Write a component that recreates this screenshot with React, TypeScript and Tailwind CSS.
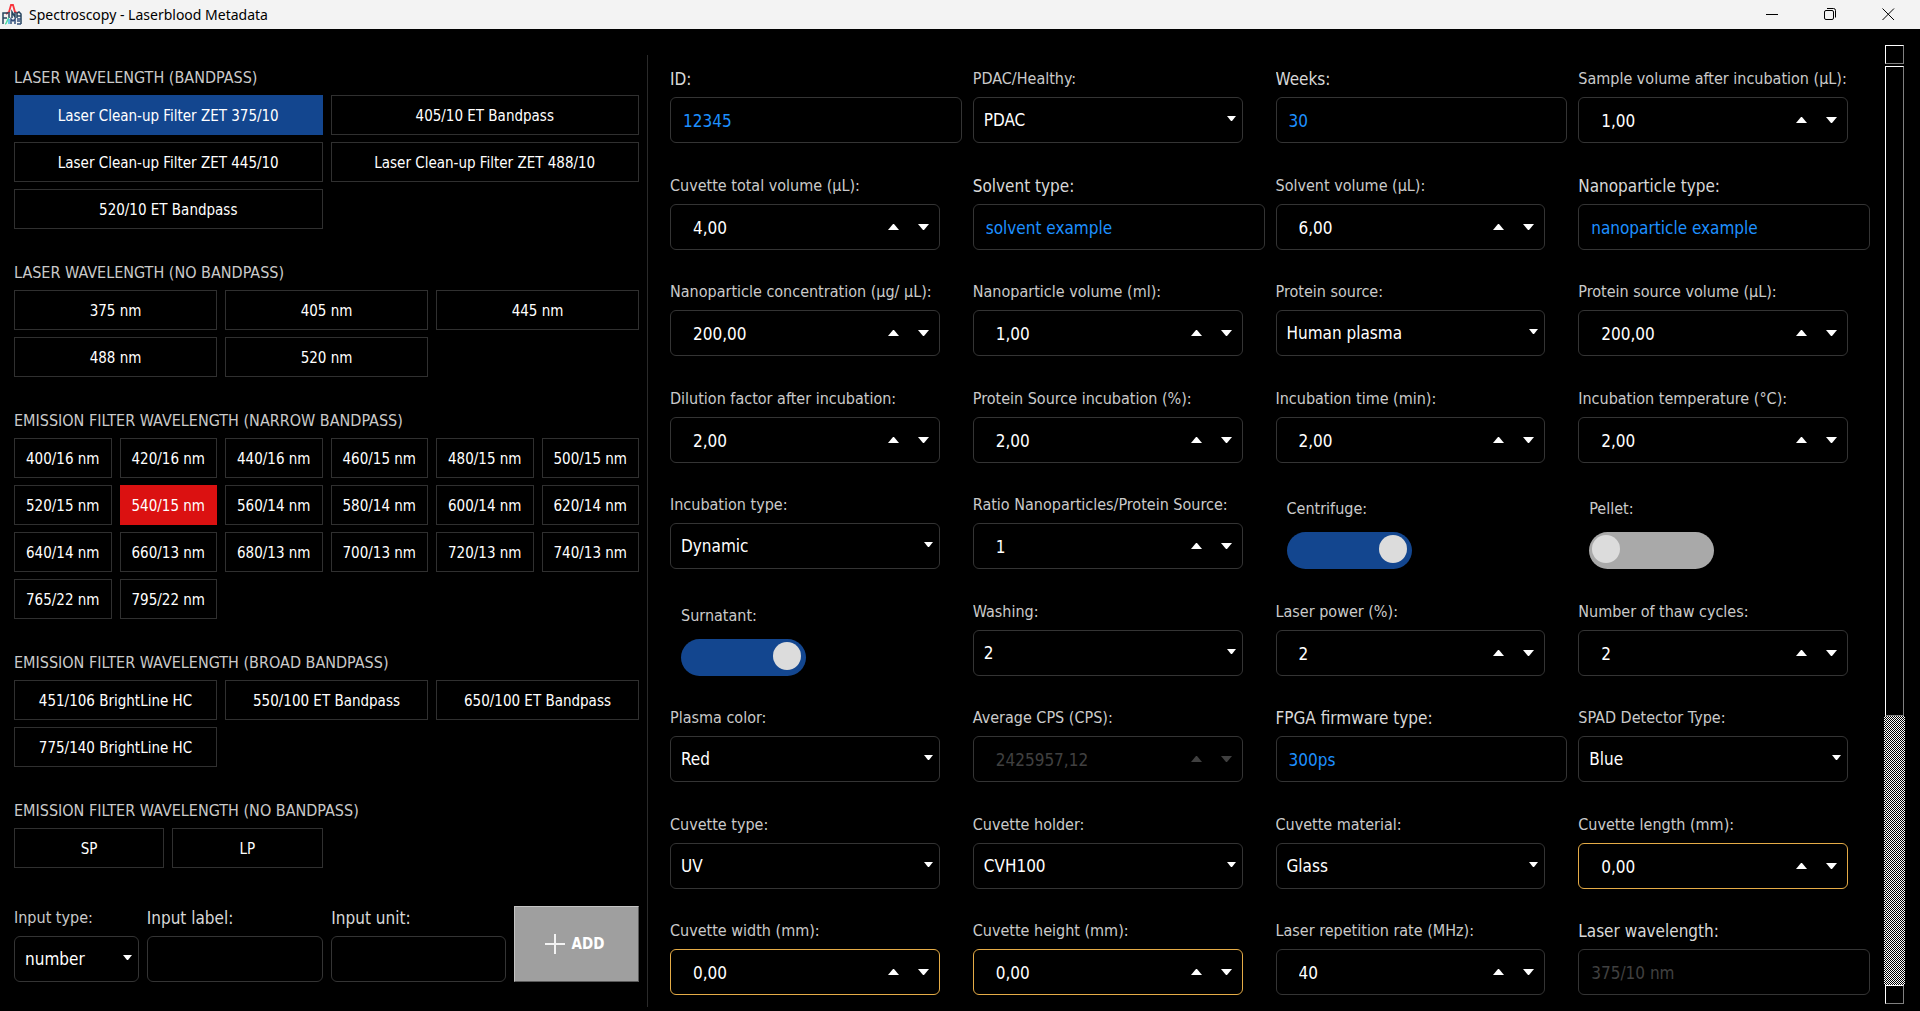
import { useId, useState, type ReactNode } from "react";

type Field =
  | { kind: "text"; label: string; value: string; disabled?: boolean }
  | { kind: "select"; label: string; value: string; options: string[] }
  | { kind: "spin"; label: string; value: string; disabled?: boolean; warn?: boolean }
  | { kind: "toggle"; label: string; on: boolean };

const fields: Field[] = [
  { kind: "text", label: "ID:", value: "12345" },
  { kind: "select", label: "PDAC/Healthy:", value: "PDAC", options: ["PDAC", "Healthy"] },
  { kind: "text", label: "Weeks:", value: "30" },
  { kind: "spin", label: "Sample volume after incubation (µL):", value: "1,00" },
  { kind: "spin", label: "Cuvette total volume (µL):", value: "4,00" },
  { kind: "text", label: "Solvent type:", value: "solvent example" },
  { kind: "spin", label: "Solvent volume (µL):", value: "6,00" },
  { kind: "text", label: "Nanoparticle type:", value: "nanoparticle example" },
  { kind: "spin", label: "Nanoparticle concentration (µg/ µL):", value: "200,00" },
  { kind: "spin", label: "Nanoparticle volume (ml):", value: "1,00" },
  { kind: "select", label: "Protein source:", value: "Human plasma", options: ["Human plasma"] },
  { kind: "spin", label: "Protein source volume (µL):", value: "200,00" },
  { kind: "spin", label: "Dilution factor after incubation:", value: "2,00" },
  { kind: "spin", label: "Protein Source incubation (%):", value: "2,00" },
  { kind: "spin", label: "Incubation time (min):", value: "2,00" },
  { kind: "spin", label: "Incubation temperature (°C):", value: "2,00" },
  { kind: "select", label: "Incubation type:", value: "Dynamic", options: ["Dynamic", "Static"] },
  { kind: "spin", label: "Ratio Nanoparticles/Protein Source:", value: "1" },
  { kind: "toggle", label: "Centrifuge:", on: true },
  { kind: "toggle", label: "Pellet:", on: false },
  { kind: "toggle", label: "Surnatant:", on: true },
  { kind: "select", label: "Washing:", value: "2", options: ["1", "2", "3"] },
  { kind: "spin", label: "Laser power (%):", value: "2" },
  { kind: "spin", label: "Number of thaw cycles:", value: "2" },
  { kind: "select", label: "Plasma color:", value: "Red", options: ["Red", "Yellow"] },
  { kind: "spin", label: "Average CPS (CPS):", value: "2425957,12", disabled: true },
  { kind: "text", label: "FPGA firmware type:", value: "300ps" },
  { kind: "select", label: "SPAD Detector Type:", value: "Blue", options: ["Blue", "Red"] },
  { kind: "select", label: "Cuvette type:", value: "UV", options: ["UV"] },
  { kind: "select", label: "Cuvette holder:", value: "CVH100", options: ["CVH100"] },
  { kind: "select", label: "Cuvette material:", value: "Glass", options: ["Glass", "Quartz"] },
  { kind: "spin", label: "Cuvette length (mm):", value: "0,00", warn: true },
  { kind: "spin", label: "Cuvette width (mm):", value: "0,00", warn: true },
  { kind: "spin", label: "Cuvette height (mm):", value: "0,00", warn: true },
  { kind: "spin", label: "Laser repetition rate (MHz):", value: "40" },
  { kind: "text", label: "Laser wavelength:", value: "375/10 nm", disabled: true },
];

function step(value: string, by: number) {
  const decimals = value.split(",")[1]?.length ?? 0;
  const next = Math.max(0, parseFloat(value.replace(",", ".")) + by);
  return next.toFixed(decimals).replace(".", ",");
}

function Arrow({ up = false }: { up?: boolean }) {
  return (
    <svg width="11" height="6" viewBox="0 0 11 6" fill="currentColor" aria-hidden="true">
      {up ? <path d="M0 6L5 0H6L11 6Z" /> : <path d="M0 0H11L6 6H5Z" />}
    </svg>
  );
}

function TextField({ label, value, disabled = false }: { label: string; value: string; disabled?: boolean }) {
  const id = useId();
  return (
    <div className="flex min-w-0 flex-col gap-1.5">
      <label htmlFor={id} className="truncate text-[17px] leading-6 text-[#d8d8d8]">{label}</label>
      <input
        id={id}
        type="text"
        defaultValue={value}
        disabled={disabled}
        className="h-[46px] w-full rounded-md border border-[#343434] bg-black px-3 pt-0.5 text-[17px] text-[#1e90ff] outline-none disabled:text-[#404040]"
      />
    </div>
  );
}

function SelectField({ label, value, options }: { label: string; value: string; options: string[] }) {
  const id = useId();
  return (
    <div className="flex min-w-0 flex-col gap-1.5">
      <label htmlFor={id} className="truncate text-base text-[#cacaca]">{label}</label>
      <div className="relative">
        <select
          id={id}
          defaultValue={value}
          className="block h-[46px] w-full appearance-none rounded-md border border-[#343434] bg-black pl-2.5 pr-6 pt-0.5 text-[17px] text-white outline-none"
        >
          {options.map((o) => (
            <option key={o}>{o}</option>
          ))}
        </select>
        <svg
          className="pointer-events-none absolute right-[7px] top-[19px] text-white"
          width="9" height="5" viewBox="0 0 9 5" fill="currentColor" aria-hidden="true"
        >
          <path d="M0 0H9L5 5H4Z" />
        </svg>
      </div>
    </div>
  );
}

function SpinField({ label, value, disabled = false, warn = false }: { label: string; value: string; disabled?: boolean; warn?: boolean }) {
  const id = useId();
  const [current, setCurrent] = useState(value);
  return (
    <div className={disabled ? "flex min-w-0 flex-col gap-1.5 text-[#404040]" : "flex min-w-0 flex-col gap-1.5 text-white"}>
      <label htmlFor={id} className="whitespace-nowrap text-base text-[#cacaca]">{label}</label>
      <div className={warn ? "flex h-[46px] items-center rounded-md border border-[#e5ac47] pr-2.5" : "flex h-[46px] items-center rounded-md border border-[#343434] pr-2.5"}>
        <input
          id={id}
          type="text"
          inputMode="decimal"
          value={current}
          disabled={disabled}
          onChange={(e) => setCurrent(e.target.value)}
          className="h-full min-w-0 flex-1 bg-transparent pl-[22px] pt-0.5 text-[17px] outline-none"
        />
        <button type="button" aria-label="Increase" disabled={disabled} onClick={() => setCurrent(step(current, 1))} className="flex h-6 w-[30px] items-center justify-end">
          <Arrow up />
        </button>
        <button type="button" aria-label="Decrease" disabled={disabled} onClick={() => setCurrent(step(current, -1))} className="flex h-6 w-[30px] items-center justify-end">
          <Arrow />
        </button>
      </div>
    </div>
  );
}

function ToggleField({ label, on }: { label: string; on: boolean }) {
  const id = useId();
  return (
    <div className="flex flex-col items-start gap-[11px] pl-[11px] pt-1">
      <label htmlFor={id} className="text-base text-[#cacaca]">{label}</label>
      <input
        id={id}
        type="checkbox"
        role="switch"
        defaultChecked={on}
        className="flex h-[37px] w-[125px] appearance-none justify-start rounded-full bg-[#a9a9a9] pl-[3px] pr-[5px] pt-[3px] before:block before:size-7 before:rounded-full before:bg-[#dcdcdc] checked:justify-end checked:bg-[#13468f]"
      />
    </div>
  );
}

function renderField(f: Field): ReactNode {
  if (f.kind === "text") return <TextField {...f} />;
  if (f.kind === "toggle") return <ToggleField {...f} />;
  return <div className="pr-[22px]">{f.kind === "select" ? <SelectField {...f} /> : <SpinField {...f} />}</div>;
}

type Group = { title: string; grid: string; items: string[]; initial?: string; active: string };

const blue = "h-10 truncate border border-[#13468f] bg-[#13468f] pt-0.5 text-[15px] text-white";
const red = "h-10 truncate border border-[#db1111] bg-[#db1111] pt-0.5 text-[15px] text-white";
const plain = "h-10 truncate border border-[#303030] bg-black pt-0.5 text-[15px] text-white";

const groups: Group[] = [
  {
    title: "LASER WAVELENGTH (BANDPASS)",
    grid: "grid grid-cols-2 gap-x-2 gap-y-[7px]",
    items: [
      "Laser Clean-up Filter ZET 375/10",
      "405/10 ET Bandpass",
      "Laser Clean-up Filter ZET 445/10",
      "Laser Clean-up Filter ZET 488/10",
      "520/10 ET Bandpass",
    ],
    initial: "Laser Clean-up Filter ZET 375/10",
    active: blue,
  },
  {
    title: "LASER WAVELENGTH (NO BANDPASS)",
    grid: "grid grid-cols-3 gap-x-2 gap-y-[7px]",
    items: ["375 nm", "405 nm", "445 nm", "488 nm", "520 nm"],
    active: blue,
  },
  {
    title: "EMISSION FILTER WAVELENGTH (NARROW BANDPASS)",
    grid: "grid grid-cols-6 gap-x-2 gap-y-[7px]",
    items: [
      "400/16 nm", "420/16 nm", "440/16 nm", "460/15 nm", "480/15 nm", "500/15 nm",
      "520/15 nm", "540/15 nm", "560/14 nm", "580/14 nm", "600/14 nm", "620/14 nm",
      "640/14 nm", "660/13 nm", "680/13 nm", "700/13 nm", "720/13 nm", "740/13 nm",
      "765/22 nm", "795/22 nm",
    ],
    initial: "540/15 nm",
    active: red,
  },
  {
    title: "EMISSION FILTER WAVELENGTH (BROAD BANDPASS)",
    grid: "grid grid-cols-3 gap-x-2 gap-y-[7px]",
    items: ["451/106 BrightLine HC", "550/100 ET Bandpass", "650/100 ET Bandpass", "775/140 BrightLine HC"],
    active: red,
  },
  {
    title: "EMISSION FILTER WAVELENGTH (NO BANDPASS)",
    grid: "grid grid-cols-4 gap-x-2 gap-y-[7px]",
    items: ["SP", "LP"],
    active: red,
  },
];

function FilterGroup({ title, grid, items, initial, active }: Group) {
  const [selected, setSelected] = useState(initial);
  return (
    <section className="flex flex-col gap-[5px]">
      <h2 className="text-base text-[#cacaca]">{title}</h2>
      <div className={grid}>
        {items.map((item) => (
          <button
            key={item}
            type="button"
            aria-pressed={item === selected}
            onClick={() => setSelected(item)}
            className={item === selected ? active : plain}
          >
            {item}
          </button>
        ))}
      </div>
    </section>
  );
}

function AppLogo() {
  return (
    <svg width="20" height="21" viewBox="0 0 20 21" fill="none" aria-hidden="true">
      <path d="M4 10L7 8L9 1L11 1L13 8L16 9" stroke="#f8343c" strokeWidth="1.8" />
      <path d="M1 20V9H6M1 14H5M7 8V14M10 14V8L13 13V8M15 14V9L17 8L19 10V20M15 12H19" stroke="#27455f" strokeWidth="1.5" />
      <path d="M9 20V15L11 17L13 15V20M15 15H19M15 17H18M15 20H19" stroke="#35507c" strokeWidth="1.5" />
      <path d="M3 20C5 20 5 15 7 14" stroke="#4ee0a0" strokeWidth="1.5" />
      <path d="M7 15V20" stroke="#3fb6e8" strokeWidth="1.5" />
    </svg>
  );
}

function TitleBar() {
  return (
    <header className="flex h-[29px] items-center bg-[#f3f3f3] pl-0.5 text-black">
      <AppLogo />
      <h1 className="flex-1 pl-[7px] font-['Noto_Sans',sans-serif] text-sm">Spectroscopy - Laserblood Metadata</h1>
      <div className="flex pr-[3px]">
        <button type="button" aria-label="Minimize" className="flex h-7 w-[58px] items-center justify-center">
          <svg width="13" height="13" viewBox="0 0 13 13" stroke="currentColor" fill="none"><path d="M0 6.5H12" /></svg>
        </button>
        <button type="button" aria-label="Restore" className="flex h-7 w-[58px] items-center justify-center">
          <svg width="13" height="13" viewBox="0 0 13 13" stroke="currentColor" fill="none">
            <rect x="0.5" y="2.5" width="9" height="9" rx="1.5" />
            <path d="M3 0.5H9.5A2 2 0 0 1 11.5 2.5V9.5" />
          </svg>
        </button>
        <button type="button" aria-label="Close" className="flex h-7 w-[58px] items-center justify-center">
          <svg width="13" height="13" viewBox="0 0 13 13" stroke="currentColor" fill="none"><path d="M0.5 0.5L12 12M12 0.5L0.5 12" /></svg>
        </button>
      </div>
    </header>
  );
}

function NewInputForm() {
  return (
    <form className="flex gap-2" onSubmit={(e) => e.preventDefault()}>
      <div className="grid flex-1 grid-cols-[125fr_177fr_175fr] gap-x-2">
        <SelectField label="Input type:" value="number" options={["number", "string", "boolean"]} />
        <TextField label="Input label:" value="" />
        <TextField label="Input unit:" value="" />
      </div>
      <button
        type="submit"
        className="flex w-1/5 items-center justify-center gap-[7px] border border-b-[#5a5a5a] border-l-[#c4c4c4] border-r-[#5a5a5a] border-t-[#c4c4c4] bg-[#9f9f9f] pr-1 text-[15px] font-bold text-white"
      >
        <svg width="20" height="20" viewBox="0 0 20 20" stroke="#f2f2f2" strokeWidth="2" aria-hidden="true"><path d="M10 0V20M0 10H20" /></svg>
        ADD
      </button>
    </form>
  );
}

function ScrollBar() {
  return (
    <div className="flex w-[21px] flex-none flex-col items-center">
      <button type="button" aria-label="Scroll up" className="h-[19px] w-[19px] flex-none border border-b-[#808080] border-l-white border-r-[#808080] border-t-white" />
      <div className="flex w-full flex-1 flex-col items-center bg-[repeating-conic-gradient(#fff_0_25%,#000_0_50%)] bg-[size:2px_2px]">
        <div className="w-full flex-[651] bg-black px-px pt-0.5">
          <div className="h-full w-full border border-b-[#808080] border-l-white border-r-[#808080] border-t-white" />
        </div>
        <div className="flex-[270]" />
      </div>
      <button type="button" aria-label="Scroll down" className="h-[19px] w-[19px] flex-none border border-b-[#808080] border-l-white border-r-[#808080] border-t-white" />
    </div>
  );
}

export default function App() {
  return (
    <div className="flex min-h-screen flex-col bg-black font-['DejaVu_Sans_Condensed','DejaVu_Sans',sans-serif]">
      <TitleBar />
      <main className="grid flex-1 grid-cols-[648fr_1272fr]">
        <div className="flex pb-1 pt-[26px]">
          <div className="flex flex-1 flex-col justify-between border-r border-[#2a2a2a] pb-[25px] pl-3.5 pr-2 pt-[11px]">
            <div className="flex flex-col gap-8">
              {groups.map((g) => (
                <FilterGroup key={g.title} {...g} />
              ))}
            </div>
            <NewInputForm />
          </div>
        </div>
        <div className="flex gap-3.5 pl-[22px] pr-[15px]">
          <div className="grid flex-1 grid-cols-4 content-between gap-x-[11px] pb-4 pt-[38px]">
            {fields.map((f) => (
              <div key={f.label} className="min-w-0">{renderField(f)}</div>
            ))}
          </div>
          <div className="flex pb-[7px] pt-4">
            <ScrollBar />
          </div>
        </div>
      </main>
    </div>
  );
}
